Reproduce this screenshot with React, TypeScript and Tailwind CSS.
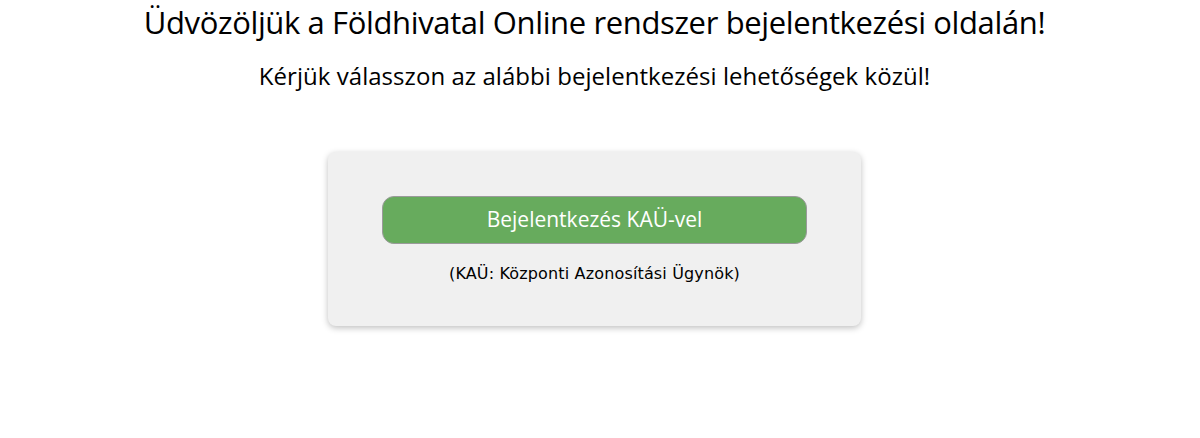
import React from "react";

export default function App() {
  return (
    <div className="min-h-[438px] w-full bg-white text-black font-['Open_Sans',sans-serif]">
      <div className="flex flex-col items-center pr-[11px]">
        <h1 className="mt-[1px] text-[31px] leading-[42px] tracking-[-0.37px] text-center">
          Üdvözöljük a Földhivatal Online rendszer bejelentkezési oldalán!
        </h1>
        <h2 className="mt-[17px] text-[24px] leading-[32px] tracking-[0.05px] text-center">
          Kérjük válasszon az alábbi bejelentkezési lehetőségek közül!
        </h2>

        <div className="mt-[60px] w-[533px] h-[174px] rounded-lg bg-[#f0f0f0] shadow-[0_2px_6px_rgba(0,0,0,0.25)] flex flex-col items-center pt-[44px]">
          <button className="w-[425px] h-[48px] rounded-[12px] bg-[#67ab5d] border border-[#9a9a9a] text-white text-[21px]">
            Bejelentkezés KAÜ-vel
          </button>
          <p className="mt-[20px] text-[16px] leading-[20px] tracking-[0.15px] font-['DejaVu_Sans',sans-serif]">
            (KAÜ: Központi Azonosítási Ügynök)
          </p>
        </div>
      </div>
    </div>
  );
}
